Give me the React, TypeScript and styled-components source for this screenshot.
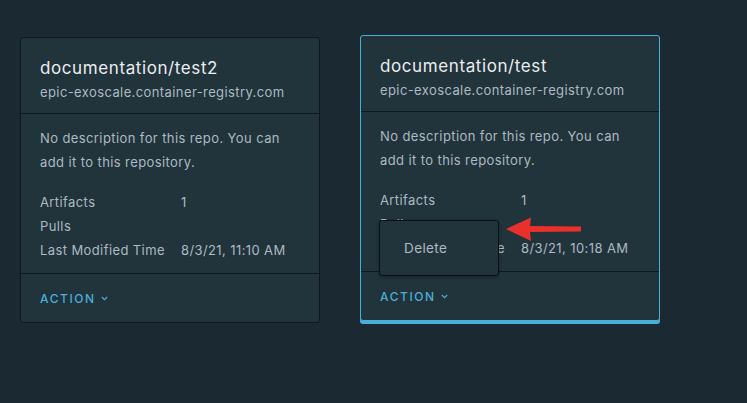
import styled, { createGlobalStyle } from "styled-components";

const GlobalStyle = createGlobalStyle`
  html, body {
    margin: 0;
    padding: 0;
    background: #1b2a32;
    font-family: Inter, "Noto Sans", sans-serif;
  }
`;

const PageEl = styled.div`
  display: flex;
  align-items: flex-start;
  gap: 40px;
  padding: 37px 20px;
  min-height: 403px;
  box-sizing: border-box;
`;

const CardEl = styled.div<{ $hover?: boolean }>`
  position: relative;
  width: 300px;
  box-sizing: border-box;
  background: #21333b;
  border: 1px solid ${(p) => (p.$hover ? "#49afd9" : "#0e181d")};
  border-radius: 3px;
  transform: ${(p) => (p.$hover ? "translateY(-2px)" : "none")};
  box-shadow: ${(p) => (p.$hover ? "0 3px 0 0 #49afd9" : "none")};
`;

const HeaderEl = styled.div`
  padding: 18px 19px 9px;
  border-bottom: 1px solid #0e181d;
`;

const TitleEl = styled.div`
  color: #eaedf0;
  font-size: 17px;
  line-height: 24px;
  letter-spacing: 0.6px;
`;

const SubTitleEl = styled.div`
  color: #acbac3;
  font-size: 13px;
  line-height: 24px;
  letter-spacing: 0.4px;
`;

const BodyEl = styled.div`
  padding: 12px 19px 11px;
  border-bottom: 1px solid #0e181d;
  color: #acbac3;
  font-size: 13px;
  line-height: 24px;
  letter-spacing: 0.4px;
`;

const DescEl = styled.p`
  margin: 0 0 16px;
`;

const PropRow = styled.div`
  display: flex;

  & > span:first-child {
    width: 141px;
    flex-shrink: 0;
  }
`;

const FooterEl = styled.div`
  height: 48px;
  display: flex;
  align-items: center;
  padding: 0 19px;
`;

const ActionBtn = styled.button`
  display: flex;
  align-items: center;
  gap: 5px;
  background: none;
  border: none;
  padding: 0;
  color: #49afd9;
  font-family: inherit;
  font-size: 12px;
  font-weight: 500;
  letter-spacing: 0.13em;
  cursor: pointer;
`;

const MenuEl = styled.div`
  position: absolute;
  left: 18px;
  top: 184px;
  width: 120px;
  height: 56px;
  box-sizing: border-box;
  background: #21333b;
  border: 1px solid #0a1014;
  border-radius: 3px;
  box-shadow: 0 1px 3px rgba(0, 0, 0, 0.3);
  display: flex;
  align-items: center;
  padding-left: 24px;
  color: #acbac3;
  font-size: 13.5px;
  letter-spacing: 0.4px;
`;

const ArrowEl = styled.svg`
  position: absolute;
  left: 144px;
  top: 180px;
`;

const Chevron = () => (
  <svg width="7" height="5" viewBox="0 0 7 5">
    <path d="M0.8 1 L3.5 3.6 L6.2 1" fill="none" stroke="#49afd9" strokeWidth="1.2" />
  </svg>
);

type Repo = {
  name: string;
  registry: string;
  artifacts: string;
  pulls: string;
  modified: string;
};

const repos: Repo[] = [
  {
    name: "documentation/test2",
    registry: "epic-exoscale.container-registry.com",
    artifacts: "1",
    pulls: "",
    modified: "8/3/21, 11:10 AM",
  },
  {
    name: "documentation/test",
    registry: "epic-exoscale.container-registry.com",
    artifacts: "1",
    pulls: "",
    modified: "8/3/21, 10:18 AM",
  },
];

function RepoCard({ repo, open }: { repo: Repo; open?: boolean }) {
  return (
    <CardEl $hover={open}>
      <HeaderEl>
        <TitleEl>{repo.name}</TitleEl>
        <SubTitleEl>{repo.registry}</SubTitleEl>
      </HeaderEl>
      <BodyEl>
        <DescEl>No description for this repo. You can add it to this repository.</DescEl>
        <PropRow>
          <span>Artifacts</span>
          <span>{repo.artifacts}</span>
        </PropRow>
        <PropRow>
          <span>Pulls</span>
          <span>{repo.pulls}</span>
        </PropRow>
        <PropRow>
          <span>Last Modified Time</span>
          <span>{repo.modified}</span>
        </PropRow>
      </BodyEl>
      <FooterEl>
        <ActionBtn>
          ACTION <Chevron />
        </ActionBtn>
      </FooterEl>
      {open && (
        <>
          <MenuEl>Delete</MenuEl>
          <ArrowEl width="80" height="28" viewBox="0 0 80 28">
            <path d="M1 13 L26 1.5 L25 10 L76 10.5 L76 15.5 L25 16 L26 25 Z" fill="#e8312a" />
          </ArrowEl>
        </>
      )}
    </CardEl>
  );
}

export default function App() {
  return (
    <>
      <GlobalStyle />
      <PageEl>
        <RepoCard repo={repos[0]} />
        <RepoCard repo={repos[1]} open />
      </PageEl>
    </>
  );
}
